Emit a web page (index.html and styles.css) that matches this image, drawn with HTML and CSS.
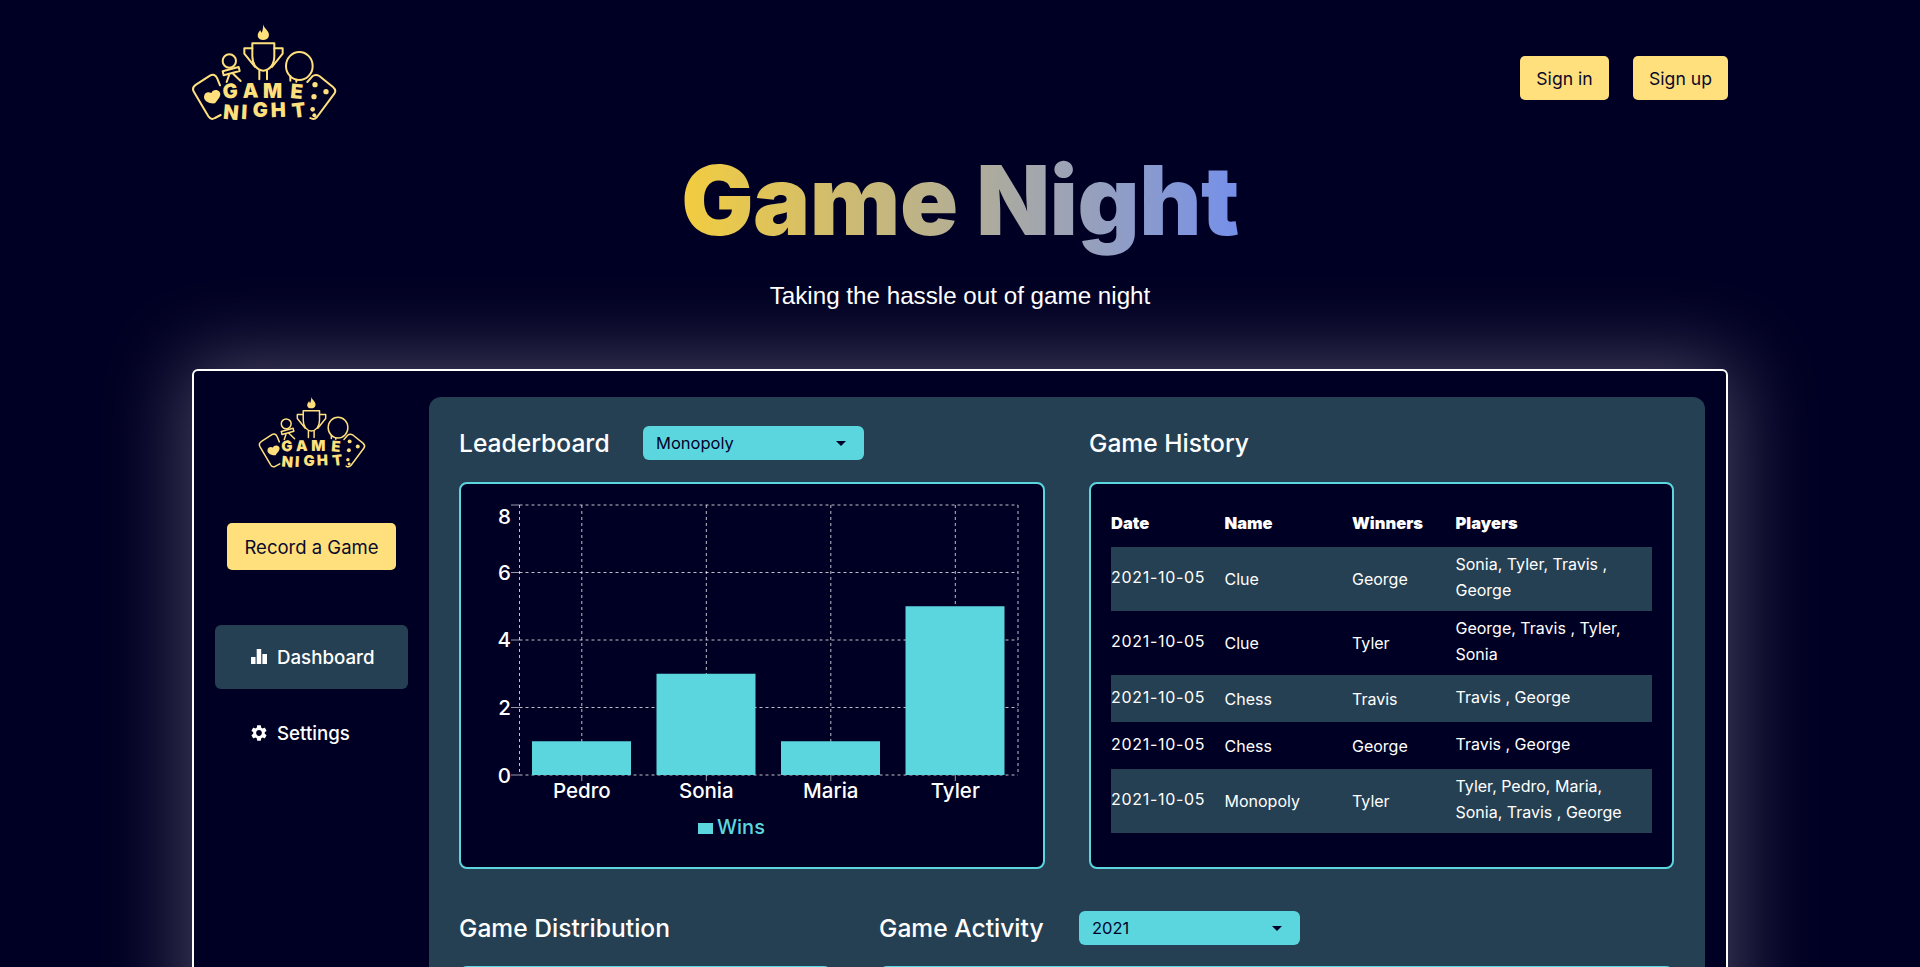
FILE: index.html
```html
<!DOCTYPE html>
<html lang="en">
<head>
<meta charset="utf-8">
<title>Game Night</title>
<link rel="stylesheet" href="styles.css">
</head>
<body>
<div class="page">
  <header class="topbar">
    <svg class="logo logo-large" viewBox="60 36 445 304" aria-label="Game Night logo">
      <g id="logo-art">
        <path class="logo-fill" d="M279 43c2 9 8 12 15 22 6 10 3 24-14 25-17 0-20-13-14-23 2-3 4-6 6-6 0 4 1 6 3 7 3-6 5-14 4-25z"/>
        <g class="logo-line">
          <path d="M247 100h66v38c0 26-14 43-33 44-19-1-33-18-33-44z"/>
          <path d="M247 115h-24v16l32 40M313 115h25v16l-32 40M268 182v26M291 182v26"/>
          <circle cx="178" cy="153" r="20"/>
          <path d="M158 184l48-13 3 12-48 13zM177 196l-7 20M190 192l22 21"/>
          <ellipse cx="388" cy="168" rx="40" ry="42"/>
          <path d="M361 198v14M379 209v6"/>
          <path d="M150 226l-8-20c-5-12-13-14-22-9l-42 27c-11 7-11 14-6 22l43 73c5 8 12 10 20 5l17-9"/>
          <path d="M412 216l15-17c6-5 14-5 21-1l41 33c8 7 9 13 4 20l-52 70c-6 7-12 8-20 3"/>
        </g>
        <path class="logo-fill" d="M149 246c-8-9-21-7-25 3-10-5-21-1-22 11-1 12 15 22 33 20 8-11 21-23 14-34z"/>
        <circle class="logo-fill" cx="435" cy="224" r="8"/>
        <circle class="logo-fill" cx="468" cy="245" r="8"/>
        <circle class="logo-fill" cx="432" cy="260" r="8"/>
        <circle class="logo-fill" cx="428" cy="298" r="7"/>
        <circle class="logo-fill" cx="433" cy="316" r="6"/>
        <g class="logo-text">
          <text transform="translate(160 266) rotate(-5)">G</text>
          <text transform="translate(218 264) rotate(-2)">A</text>
          <text transform="translate(279 264)">M</text>
          <text transform="translate(360 264) rotate(5)">E</text>
          <text transform="translate(158 326) rotate(5)">N</text>
          <text transform="translate(213 327) rotate(3)">I</text>
          <text transform="translate(248 322)">G</text>
          <text transform="translate(303 322) rotate(-2)">H</text>
          <text transform="translate(368 324) rotate(-7)">T</text>
        </g>
      </g>
    </svg>
    <div class="auth">
      <button class="btn btn-auth-in">Sign in</button>
      <button class="btn btn-auth-up">Sign up</button>
    </div>
  </header>

  <section class="hero">
    <h1 class="title">Game Night</h1>
    <p class="tagline">Taking the hassle out of game night</p>
  </section>

  <section class="frame">
    <aside class="sidebar">
      <svg class="logo logo-small" viewBox="60 36 445 304" aria-hidden="true"><use href="#logo-art"/></svg>
      <button class="btn btn-record">Record a Game</button>
      <nav class="nav">
        <a class="nav-item nav-item-active">
          <svg class="nav-icon" viewBox="0 0 16 16"><path d="M0 8h4.500v7H0zM5.700 0h4.500v15H5.700zM11.400 5H16v10h-4.600z"/></svg>
          Dashboard
        </a>
        <a class="nav-item">
          <svg class="nav-icon" viewBox="2 2 20 20"><path d="M19.14 12.94c.04-.3.06-.61.06-.94 0-.32-.02-.64-.07-.94l2.03-1.58c.18-.14.23-.41.12-.61l-1.92-3.32c-.12-.22-.37-.29-.59-.22l-2.39.96c-.5-.38-1.03-.7-1.62-.94l-.36-2.54c-.04-.24-.24-.41-.48-.41h-3.84c-.24 0-.43.17-.47.41l-.36 2.54c-.59.24-1.13.57-1.62.94l-2.39-.96c-.22-.08-.47 0-.59.22L2.74 8.87c-.12.21-.08.47.12.61l2.03 1.58c-.05.3-.09.63-.09.94s.02.64.07.94l-2.03 1.58c-.18.14-.23.41-.12.61l1.92 3.32c.12.22.37.29.59.22l2.39-.96c.5.38 1.03.7 1.62.94l.36 2.54c.05.24.24.41.48.41h3.84c.24 0 .44-.17.47-.41l.36-2.54c.59-.24 1.13-.56 1.62-.94l2.39.96c.22.08.47 0 .59-.22l1.92-3.32c.12-.22.07-.47-.12-.61l-2.01-1.58zM12 15.6c-1.98 0-3.6-1.62-3.6-3.6s1.62-3.6 3.6-3.6 3.6 1.62 3.6 3.6-1.62 3.6-3.6 3.6z"/></svg>
          Settings
        </a>
      </nav>
    </aside>

    <main class="panel">
      <div class="row row-top">
        <div class="block">
          <div class="block-head">
            <h2 class="block-title block-title-fixed">Leaderboard</h2>
            <div class="select"><span>Monopoly</span><i class="caret"></i></div>
          </div>
          <div class="card">
            <svg class="chart" viewBox="0 0 582 383">
              <g class="grid">
                <path d="M58.5 21H557M58.5 88.5H557M58.5 156H557M58.5 223.5H557M58.5 291H557"/>
                <path d="M58.5 21V291M120.8 21V291M245.3 21V291M369.8 21V291M494.3 21V291M557 21V291"/>
              </g>
              <path class="ticks" d="M50 21h8.500M50 88.500h8.500M50 156h8.500M50 223.500h8.500M50 291h8.500M120.800 291v6M245.300 291v6M369.800 291v6M494.300 291v6"/>
              <g class="bars">
                <rect x="71" y="257.250" width="99" height="33.750"/>
                <rect x="195.500" y="189.750" width="99" height="101.250"/>
                <rect x="320" y="257.250" width="99" height="33.750"/>
                <rect x="444.500" y="122.250" width="99" height="168.750"/>
              </g>
              <g class="axis-y">
                <text x="50" y="40">8</text>
                <text x="50" y="96">6</text>
                <text x="50" y="163">4</text>
                <text x="50" y="231">2</text>
                <text x="50" y="299">0</text>
              </g>
              <g class="axis-x">
                <text x="120.800" y="314">Pedro</text>
                <text x="245.300" y="314">Sonia</text>
                <text x="369.800" y="314">Maria</text>
                <text x="494.300" y="314">Tyler</text>
              </g>
              <rect class="legend-swatch" x="237" y="339" width="15" height="11"/>
              <text class="legend-text" x="256" y="350">Wins</text>
            </svg>
          </div>
        </div>
        <div class="block">
          <div class="block-head">
            <h2 class="block-title">Game History</h2>
          </div>
          <div class="card card-table">
            <table class="history">
              <colgroup><col class="col-date"><col class="col-name"><col class="col-winners"><col></colgroup>
              <thead>
                <tr><th>Date</th><th>Name</th><th>Winners</th><th>Players</th></tr>
              </thead>
              <tbody>
                <tr class="tall"><td class="up date">2021-10-05</td><td>Clue</td><td>George</td><td class="up">Sonia, Tyler, Travis , George</td></tr>
                <tr class="tall"><td class="up date">2021-10-05</td><td>Clue</td><td>Tyler</td><td class="up">George, Travis , Tyler, Sonia</td></tr>
                <tr><td class="up date">2021-10-05</td><td>Chess</td><td>Travis</td><td class="up">Travis , George</td></tr>
                <tr><td class="up date">2021-10-05</td><td>Chess</td><td>George</td><td class="up">Travis , George</td></tr>
                <tr class="tall"><td class="up date">2021-10-05</td><td>Monopoly</td><td>Tyler</td><td class="up">Tyler, Pedro, Maria, Sonia, Travis , George</td></tr>
              </tbody>
            </table>
          </div>
        </div>
      </div>
      <div class="row row-bottom">
        <div class="block">
          <div class="block-head">
            <h2 class="block-title">Game Distribution</h2>
          </div>
          <div class="card card-lower"></div>
        </div>
        <div class="block">
          <div class="block-head">
            <h2 class="block-title block-title-fixed-b">Game Activity</h2>
            <div class="select"><span>2021</span><i class="caret"></i></div>
          </div>
          <div class="card card-lower"></div>
        </div>
      </div>
    </main>
  </section>
</div>
</body>
</html>
```
FILE: styles.css
```css
* { box-sizing: border-box; }
html, body { height: 100%; }
body {
  margin: 0;
  overflow: hidden;
  background: #000024;
  color: #fff;
  font-family: Inter, "Noto Sans", sans-serif;
}
.page { width: 1536px; margin: 0 auto; }

.topbar {
  display: flex;
  justify-content: space-between;
  align-items: flex-start;
  height: 142px;
  padding-top: 22px;
}
.logo { display: block; }
.logo-large { width: 148.330px; height: 101.330px; margin-left: -2px; }
.logo-small { width: 110px; height: 75px; margin-top: -2px; }
.logo-fill { fill: #ffe07d; }
.logo-line { fill: none; stroke: #ffe07d; stroke-width: 6; stroke-linecap: round; stroke-linejoin: round; }
.logo-text { fill: #ffe07d; font-family: Inter, sans-serif; font-weight: 900; font-size: 60px; }

.auth { display: flex; gap: 24px; padding-top: 34px; }
.btn {
  border: 0;
  border-radius: 5px;
  background: #ffe07d;
  color: #0a0a2a;
  font-family: Inter, sans-serif;
  font-size: 17.600px;
  padding: 0;
}
.btn-auth-in { width: 89px; height: 44px; }
.btn-auth-up { width: 95px; height: 44px; }

.hero { text-align: center; }
.title {
  display: inline-block;
  margin: 0;
  font-size: 96px;
  line-height: 116px;
  font-weight: 900;
  letter-spacing: -.5px;
  color: transparent;
  background: linear-gradient(90deg, #f3cd3f, #7590ea);
  -webkit-background-clip: text;
  background-clip: text;
}
.tagline {
  margin: 22px 0 0;
  font-family: "Liberation Sans", Arial, sans-serif;
  font-size: 24.200px;
  line-height: 32px;
}

.frame {
  display: flex;
  align-items: flex-start;
  margin-top: 57px;
  padding: 26px 21px 0 0;
  height: 1000px;
  border: 2px solid #fff;
  border-radius: 6px;
  background: #000024;
  box-shadow: 0 0 80px 8px rgba(255, 245, 245, .28);
}
.sidebar {
  flex: 0 0 235px;
  display: flex;
  flex-direction: column;
  align-items: center;
  padding: 0 21px;
}
.btn-record { width: 169px; height: 47px; margin-top: 53px; font-size: 18.500px; }
.nav { width: 100%; margin-top: 55px; display: flex; flex-direction: column; gap: 12px; }
.nav-item {
  display: flex;
  align-items: center;
  gap: 10px;
  height: 64px;
  padding-left: 36px;
  border-radius: 6px;
  color: #fff;
  font-size: 18.700px;
  font-weight: 500;
}
.nav-item-active { background: #264053; }
.nav-icon { width: 16px; height: 16px; fill: #fff; flex: none; }

.panel {
  flex: 1;
  min-width: 0;
  height: 960px;
  padding: 29px 31px 0 30px;
  border-radius: 12px;
  background: #264053;
}
.row { display: grid; }
.row-top { grid-template-columns: 586px 585px; column-gap: 44px; }
.row-bottom { grid-template-columns: 373px 1fr; column-gap: 47px; margin-top: 42px; }
.block-head { display: flex; align-items: center; gap: 35px; height: 34px; margin-bottom: 22px; }
.row-bottom .block-head { margin-bottom: 21px; }
.block-title { margin: 0; font-size: 24.600px; line-height: 34px; font-weight: 500; white-space: nowrap; }
.block-title-fixed { width: 149px; }
.block-title-fixed-b { width: 165px; }
.select {
  display: flex;
  align-items: center;
  justify-content: space-between;
  width: 221px;
  height: 34px;
  padding: 0 13px;
  border-radius: 6px;
  background: #5cd6de;
  color: #00022a;
  font-size: 16.500px;
}
.caret {
  width: 0;
  height: 0;
  margin-right: 5px;
  border-left: 5px solid transparent;
  border-right: 5px solid transparent;
  border-top: 5px solid #00022a;
}
.card {
  height: 387px;
  border: 2px solid #5cd6de;
  border-radius: 8px;
  background: #000024;
}
.card-lower { height: 300px; }
.card-table { padding: 14px 20px 0; }

.chart { display: block; width: 582px; height: 383px; }
.grid path { fill: none; stroke: rgba(255, 255, 255, .75); stroke-width: 1; stroke-dasharray: 3 3; }
.ticks { fill: none; stroke: rgba(255, 255, 255, .6); stroke-width: 1; }
.bars rect, .legend-swatch { fill: #5cd6de; }
.axis-y text, .axis-x text { fill: #fff; font-size: 20.500px; font-weight: 500; }
.axis-y text { text-anchor: end; }
.axis-x text { text-anchor: middle; }
.legend-text { fill: #5cd6de; font-size: 20px; font-weight: 500; }

.history { width: 100%; table-layout: fixed; border-collapse: collapse; font-size: 16px; line-height: 26px; }
.col-date { width: 113.500px; }
.col-name { width: 127.500px; }
.col-winners { width: 103.500px; }
.history th { height: 49px; padding: 0; text-align: left; font-size: 16.500px; font-weight: 900; }
.history td { height: 47px; padding: 0; vertical-align: middle; }
.history .tall td { height: 64px; }
.history td.up { padding-bottom: 4px; }
.history td.date { letter-spacing: .7px; }
.history tbody tr:nth-child(odd) { background: #264053; }
```
